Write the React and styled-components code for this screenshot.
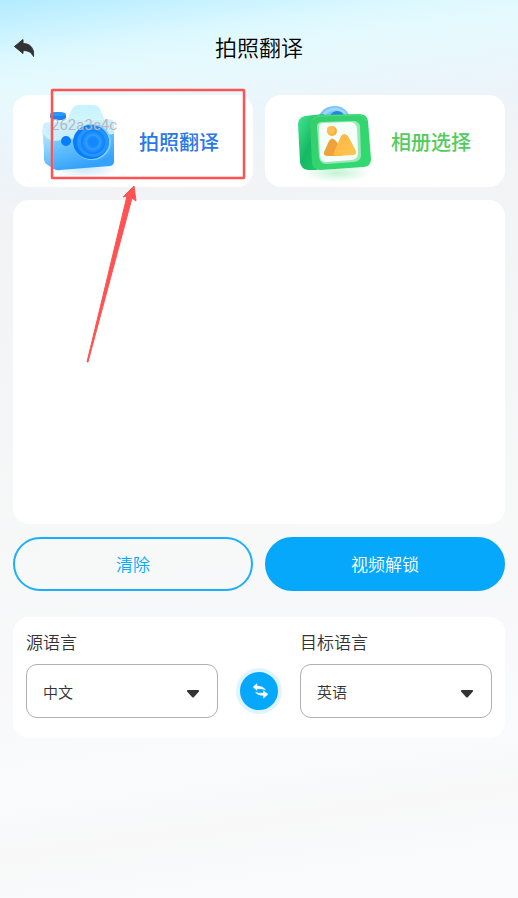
import React, { useState } from "react";
import styled, { createGlobalStyle } from "styled-components";

const GlobalStyle = createGlobalStyle`
  *, *::before, *::after { box-sizing: border-box; }
  body { margin: 0; }
  body, button, select, textarea {
    font-family: "Noto Sans CJK SC", "Noto Sans", sans-serif;
    font-weight: 350;
  }
`;

const Page = styled.div`
  min-height: 100vh;
  padding: 0 13px 13px;
  color: #333;
  background: linear-gradient(
    172deg,
    #b3ebff 0,
    #c8f2ff 30px,
    #dcf8ff 58px,
    #e6fafe 90px,
    #ebf5fb 145px,
    #f1f3f6 205px,
    #f3f4f5 300px,
    #f7f8f8 570px,
    #f8f8fa 680px,
    #f9fbfd 790px,
    #f8f8f8 850px,
    #f9fbfd 920px
  );
`;

const Header = styled.header`
  display: grid;
  grid-template-columns: 24px 1fr 24px;
  align-items: center;
  height: 95px;
`;

const Title = styled.h1`
  margin: 0;
  padding-bottom: 3px;
  color: #000;
  font-size: 22px;
  font-weight: 350;
  line-height: 32px;
  text-align: center;
`;

const BackButton = styled.button`
  display: flex;
  padding: 0;
  border: 0;
  background: none;
  cursor: pointer;
`;

const Main = styled.main`
  display: flex;
  flex-direction: column;
  gap: 13px;
`;

const Pair = styled.div`
  display: grid;
  grid-template-columns: 1fr 1fr;
  gap: 12px;
`;

const SourceSlot = styled.div`
  position: relative;
  display: grid;
`;

const SourceButton = styled.button`
  display: flex;
  align-items: center;
  justify-content: center;
  gap: 20px;
  height: 92px;
  padding: 0 10px 0 0;
  border: 0;
  border-radius: 16px;
  background: #fff;
  color: ${(p) => p.$color};
  font-size: 20px;
  font-weight: 500;
  cursor: pointer;
`;

const Watermark = styled.span`
  position: absolute;
  top: 20px;
  left: 38px;
  color: #b5b9bd;
  font-family: Roboto, sans-serif;
  font-size: 15px;
  font-weight: 400;
  line-height: 20px;
  pointer-events: none;
`;

const Callout = styled.svg`
  position: absolute;
  top: -7px;
  left: 37px;
  z-index: 1;
  pointer-events: none;
`;

const Result = styled.textarea`
  display: block;
  width: 100%;
  height: 324px;
  padding: 16px;
  border: 0;
  border-radius: 16px;
  outline: 0;
  background: #fff;
  color: #333;
  font-size: 17px;
  resize: none;
`;

const ActionButton = styled.button`
  height: 54px;
  padding: 0 16px 2px;
  border: 2px solid #1caffa;
  border-color: ${(p) => (p.$filled ? "#05a8fa" : "#1caffa")};
  border-radius: 27px;
  background: ${(p) => (p.$filled ? "#05a8fa" : "transparent")};
  color: ${(p) => (p.$filled ? "#fff" : "#05a8fa")};
  font-size: 17px;
  cursor: pointer;
`;

const Languages = styled.section`
  display: grid;
  grid-template-columns: 1fr 82px 1fr;
  align-items: end;
  margin-top: 13px;
  padding: 13px 13px 20px;
  border-radius: 16px;
  background: #fff;
`;

const Field = styled.label`
  display: grid;
  gap: 10px;
  font-size: 17px;
  line-height: 24px;
`;

const SelectBox = styled.span`
  position: relative;
  display: grid;
`;

const Select = styled.select`
  width: 100%;
  height: 54px;
  padding: 0 40px 0 16px;
  border: 1px solid #b0b0b0;
  border-radius: 11px;
  appearance: none;
  background: #fff;
  color: #333;
  font-size: 15px;
`;

const CaretIcon = styled.svg`
  position: absolute;
  top: 25px;
  right: 18px;
  pointer-events: none;
`;

const SwapButton = styled.button`
  display: flex;
  align-items: center;
  justify-content: center;
  justify-self: center;
  width: 46px;
  height: 46px;
  margin-bottom: 4px;
  padding: 0;
  border: 4px solid #e0f4ff;
  border-radius: 50%;
  background: #05a8fa;
  cursor: pointer;
`;

function BackIcon() {
  return (
    <svg width="22" height="20" viewBox="0 0 22 20" aria-hidden="true">
      <path
        d="M1.500 8.500 10 1.500V5.500C17 5.500 21.500 10 20.500 18.500 18.500 14.500 15.500 12.500 10 12.500V15.500Z"
        fill="#333"
        stroke="#333"
        strokeWidth="1"
        strokeLinejoin="round"
      />
    </svg>
  );
}

function CameraIcon() {
  return (
    <svg width="82" height="84" viewBox="-1 0 82 84" aria-hidden="true">
      <defs>
        <linearGradient id="cam-body" x1="0" y1="0" x2="0.4" y2="1">
          <stop offset="0" stopColor="#a2e2ff" />
          <stop offset=".5" stopColor="#6bc5ff" />
          <stop offset="1" stopColor="#34a1fa" />
        </linearGradient>
        <linearGradient id="cam-side" x1="0" y1="0" x2="0" y2="1">
          <stop offset="0" stopColor="#c0edff" />
          <stop offset="1" stopColor="#55b9fb" />
        </linearGradient>
        <linearGradient id="cam-top" x1="0" y1="0" x2="0" y2="1">
          <stop offset="0" stopColor="#c6f3fc" />
          <stop offset="1" stopColor="#e2f8ff" />
        </linearGradient>
        <radialGradient id="cam-lens">
          <stop offset="0" stopColor="#2a9bff" />
          <stop offset=".4" stopColor="#158aff" />
          <stop offset=".6" stopColor="#2b9cff" />
          <stop offset="1" stopColor="#0d7cff" />
        </radialGradient>
        <radialGradient id="cam-shadow">
          <stop offset="0" stopColor="#c5e5ff" />
          <stop offset="1" stopColor="#c5e5ff" stopOpacity="0" />
        </radialGradient>
      </defs>
      <ellipse cx="47" cy="68" rx="34" ry="13" fill="url(#cam-shadow)" />
      <path d="M28 24 33 12q2-6 8-6l14 0q6 0 8 6l4 10 3 4v17H25Z" fill="url(#cam-top)" />
      <path d="M5 28q0-4 5-4l15-1q5 0 10-2h36q5 0 5 5v37q0 3-4 4L22 71q-3 1-6-1l-7-5q-3-2-3-6V38q-2-2-1-10Z" fill="url(#cam-body)" />
      <path d="M5 29v10l2 25 9 6V41Q8 35 5 29" fill="url(#cam-side)" />
      <path d="M5 27q-1-4 5-4h17l7-3h37q4 0 5 3v12L16 42q-8-2-11-8Z" fill="#d6f4ff" opacity=".85" />
      <path d="M12 17q0-4 7-4t9 3v3q-3 3-9 2-6 0-7-3Z" fill="#1585f2" />
      <ellipse cx="20" cy="15" rx="8" ry="2" fill="#2c98f6" />
      <circle cx="28" cy="42" r="5" fill="#087cff" />
      <ellipse cx="54" cy="43" rx="19" ry="18" fill="#82d0ff" />
      <ellipse cx="53" cy="43" rx="18" ry="17" fill="#087dfc" />
      <ellipse cx="55" cy="43" rx="16" ry="15" fill="#2494ff" />
      <circle cx="55" cy="43" r="12" fill="url(#cam-lens)" />
      <circle cx="55" cy="43" r="7" fill="none" stroke="#359fff" strokeWidth="1" />
      <circle cx="55" cy="43" r="4" fill="#1686ff" />
    </svg>
  );
}

function AlbumIcon() {
  return (
    <svg width="82" height="84" viewBox="-8 -4 82 84" aria-hidden="true">
      <defs>
        <linearGradient id="album-side" x1="0" y1="0" x2="1" y2="1">
          <stop offset="0" stopColor="#46e891" />
          <stop offset=".5" stopColor="#15b965" />
          <stop offset="1" stopColor="#23ce69" />
        </linearGradient>
        <linearGradient id="album-face" x1="0" y1="0" x2="1" y2="1">
          <stop offset="0" stopColor="#36cd6e" />
          <stop offset="1" stopColor="#30dc6e" />
        </linearGradient>
        <linearGradient id="album-hill" x1="0" y1="0" x2="1" y2="1">
          <stop offset="0" stopColor="#ffb444" />
          <stop offset="1" stopColor="#ffc751" />
        </linearGradient>
        <radialGradient id="album-shadow">
          <stop offset="0" stopColor="#c4f3d3" />
          <stop offset="1" stopColor="#c4f3d3" stopOpacity="0" />
        </radialGradient>
      </defs>
      <ellipse cx="40" cy="70" rx="34" ry="9" fill="url(#album-shadow)" />
      <path d="M20 18Q24 3 38 3q11 0 16 13v8H20Z" fill="#79c2ff" />
      <path d="M24 17Q28 6 39 6q9 1 12 11" fill="none" stroke="#9ad7ff" strokeWidth="3" />
      <path d="M32 14q3-6 8-6 6 0 8 6Z" fill="#2784df" />
      <path d="M1 21q0-6 7-8l19-2-7 56-9 0q-7-1-8-8Z" fill="url(#album-side)" />
      <path d="M13 20q0-8 8-8l41-1q8 0 9 7l3 38q0 7-7 8l-44 3q-7 0-8-7Z" fill="url(#album-face)" />
      <path d="M16 17q2-4 7-4l38-1q6 0 8 6" fill="none" stroke="#65ed91" strokeOpacity=".5" />
      <path d="M20 24q0-5 5-5l31-1q6 0 7 5l1 29q0 6-7 7l-28 2q-6 0-7-7Z" fill="#9ae8ba" />
      <path d="M22 24q0-4 5-4l26-1q6 0 7 6l1 25q0 7-7 7l-25 2q-5 0-6-6Z" fill="#f4fffa" />
      <circle cx="35" cy="28" r="5" fill="#f6ad42" />
      <circle cx="34" cy="27" r="4" fill="#ffc04f" />
      <path d="m27 49 5-11q3-5 7 0l7 10q1 5-3 5H31q-5 0-4-4" fill="#efa13c" />
      <path d="m37 49 7-16q3-4 7 0l8 15q1 4-3 4l-16 1q-5 0-3-4" fill="url(#album-hill)" />
    </svg>
  );
}

function Caret() {
  return (
    <CaretIcon width="14" height="10" viewBox="0 0 14 10" aria-hidden="true">
      <path d="M2 1h10q2 0 .5 2L8 8q-1 1-2 0L1.500 3Q0 1 2 1" fill="#333" />
    </CaretIcon>
  );
}

function SwapIcon() {
  return (
    <svg width="20" height="18" viewBox="0 0 20 18" aria-hidden="true">
      <path
        d="M4 5 8 1.500V4q6 0 8.500 3.800Q13 6.500 8 6.700V8.500ZM19 12.300 14.500 8.700V11Q10 11.500 6.500 10.300 9 13.500 14.500 13.500V16.300Z"
        fill="#fff"
        stroke="#fff"
        strokeWidth=".4"
        strokeLinejoin="round"
      />
    </svg>
  );
}

function Annotation() {
  return (
    <Callout width="196" height="276" viewBox="0 0 196 276" aria-hidden="true">
      <rect x="2" y="2" width="192" height="88" rx=".5" fill="none" stroke="#ff5252" strokeWidth="2.500" />
      <path d="m84 98 2 15-4-3-44 164h-1l40-166-4 1Z" fill="#ff5252" stroke="#ff5252" strokeLinejoin="round" />
    </Callout>
  );
}

function LanguageSelect({ label, value, onChange }) {
  return (
    <Field>
      {label}
      <SelectBox>
        <Select value={value} onChange={(e) => onChange(e.target.value)}>
          <option value="zh">中文</option>
          <option value="en">英语</option>
        </Select>
        <Caret />
      </SelectBox>
    </Field>
  );
}

export default function App() {
  const [source, setSource] = useState("zh");
  const [target, setTarget] = useState("en");
  const [text, setText] = useState("");

  const swap = () => {
    setSource(target);
    setTarget(source);
  };

  return (
    <>
      <GlobalStyle />
      <Page>
        <Header>
          <BackButton type="button" aria-label="返回">
            <BackIcon />
          </BackButton>
          <Title>拍照翻译</Title>
        </Header>
        <Main>
          <Pair>
            <SourceSlot>
              <SourceButton type="button" $color="#2878e8">
                <CameraIcon />
                拍照翻译
              </SourceButton>
              <Watermark>262a3e4c</Watermark>
              <Annotation />
            </SourceSlot>
            <SourceSlot>
              <SourceButton type="button" $color="#51cb5c">
                <AlbumIcon />
                相册选择
              </SourceButton>
            </SourceSlot>
          </Pair>
          <Result
            aria-label="翻译结果"
            value={text}
            onChange={(e) => setText(e.target.value)}
          />
          <Pair>
            <ActionButton type="button" onClick={() => setText("")}>
              清除
            </ActionButton>
            <ActionButton type="button" $filled>
              视频解锁
            </ActionButton>
          </Pair>
          <Languages>
            <LanguageSelect label="源语言" value={source} onChange={setSource} />
            <SwapButton type="button" aria-label="交换语言" onClick={swap}>
              <SwapIcon />
            </SwapButton>
            <LanguageSelect label="目标语言" value={target} onChange={setTarget} />
          </Languages>
        </Main>
      </Page>
    </>
  );
}
